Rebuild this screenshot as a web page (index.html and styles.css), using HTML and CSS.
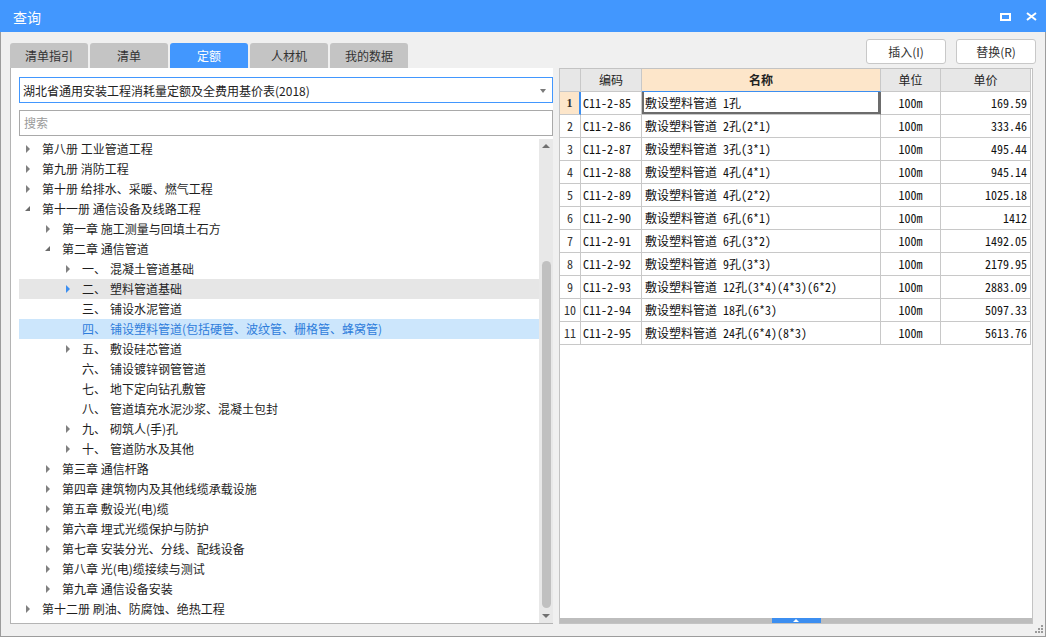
FILE: index.html
```html
<!DOCTYPE html>
<html>
<head>
<meta charset="utf-8">
<link rel="stylesheet" href="styles.css">
</head>
<body>
<div class="window">
  <div class="titlebar">
    <span class="title">查询</span>
    <span class="tb-icons">
      <svg width="11" height="8" viewBox="0 0 11 8"><rect x="1" y="1" width="9" height="6" fill="none" stroke="#fff" stroke-width="2"/></svg>
      <svg width="11" height="9" viewBox="0 0 11 9"><path d="M1 1L10 8M10 1L1 8" stroke="#fff" stroke-width="2" fill="none"/></svg>
    </span>
  </div>
  <div class="toprow">
    <div class="tabs">
      <div class="tab">清单指引</div>
      <div class="tab">清单</div>
      <div class="tab active">定额</div>
      <div class="tab">人材机</div>
      <div class="tab">我的数据</div>
    </div>
    <div class="buttons">
      <button class="btn">插入(I)</button>
      <button class="btn">替换(R)</button>
    </div>
  </div>
  <div class="main">
    <div class="left">
      <div class="combo"><span>湖北省通用安装工程消耗量定额及全费用基价表(2018)</span><i class="combo-arrow"></i></div>
      <div class="search">搜索</div>
      <div class="treewrap">
        <div class="tree">
          <div class="row l0"><i class="arr shut"></i><span>第八册 工业管道工程</span></div>
          <div class="row l0"><i class="arr shut"></i><span>第九册 消防工程</span></div>
          <div class="row l0"><i class="arr shut"></i><span>第十册 给排水、采暖、燃气工程</span></div>
          <div class="row l0"><i class="arr open"></i><span>第十一册 通信设备及线路工程</span></div>
          <div class="row l1"><i class="arr shut"></i><span>第一章 施工测量与回填土石方</span></div>
          <div class="row l1"><i class="arr open"></i><span>第二章 通信管道</span></div>
          <div class="row l2"><i class="arr shut"></i><span class="no">一、</span><span>混凝土管道基础</span></div>
          <div class="row l2 hover"><i class="arr shut blue"></i><span class="no">二、</span><span>塑料管道基础</span></div>
          <div class="row l2"><i class="arr"></i><span class="no">三、</span><span>铺设水泥管道</span></div>
          <div class="row l2 sel"><i class="arr"></i><span class="no">四、</span><span>铺设塑料管道(包括硬管、波纹管、栅格管、蜂窝管)</span></div>
          <div class="row l2"><i class="arr shut"></i><span class="no">五、</span><span>敷设硅芯管道</span></div>
          <div class="row l2"><i class="arr"></i><span class="no">六、</span><span>铺设镀锌钢管管道</span></div>
          <div class="row l2"><i class="arr"></i><span class="no">七、</span><span>地下定向钻孔敷管</span></div>
          <div class="row l2"><i class="arr"></i><span class="no">八、</span><span>管道填充水泥沙浆、混凝土包封</span></div>
          <div class="row l2"><i class="arr shut"></i><span class="no">九、</span><span>砌筑人(手)孔</span></div>
          <div class="row l2"><i class="arr shut"></i><span class="no">十、</span><span>管道防水及其他</span></div>
          <div class="row l1"><i class="arr shut"></i><span>第三章 通信杆路</span></div>
          <div class="row l1"><i class="arr shut"></i><span>第四章 建筑物内及其他线缆承载设施</span></div>
          <div class="row l1"><i class="arr shut"></i><span>第五章 敷设光(电)缆</span></div>
          <div class="row l1"><i class="arr shut"></i><span>第六章 埋式光缆保护与防护</span></div>
          <div class="row l1"><i class="arr shut"></i><span>第七章 安装分光、分线、配线设备</span></div>
          <div class="row l1"><i class="arr shut"></i><span>第八章 光(电)缆接续与测试</span></div>
          <div class="row l1"><i class="arr shut"></i><span>第九章 通信设备安装</span></div>
          <div class="row l0"><i class="arr shut"></i><span>第十二册 刷油、防腐蚀、绝热工程</span></div>
        </div>
        <div class="vscroll">
          <i class="sb-up"></i>
          <div class="sb-space"></div>
          <div class="sb-thumb"></div>
          <i class="sb-down"></i>
        </div>
      </div>
    </div>
    <div class="right">
      <div class="grid">
        <div class="gr head">
          <div class="c num"></div>
          <div class="c">编码</div>
          <div class="c cur-col">名称</div>
          <div class="c">单位</div>
          <div class="c">单价</div>
        </div>
        <div class="gr">
          <div class="c num cur-row">1</div><div class="c code">C11-2-85</div><div class="c name cur">敷设塑料管道 1孔</div><div class="c unit">100m</div><div class="c price">169.59</div>
        </div>
        <div class="gr">
          <div class="c num">2</div><div class="c code">C11-2-86</div><div class="c name">敷设塑料管道 2孔(2*1)</div><div class="c unit">100m</div><div class="c price">333.46</div>
        </div>
        <div class="gr">
          <div class="c num">3</div><div class="c code">C11-2-87</div><div class="c name">敷设塑料管道 3孔(3*1)</div><div class="c unit">100m</div><div class="c price">495.44</div>
        </div>
        <div class="gr">
          <div class="c num">4</div><div class="c code">C11-2-88</div><div class="c name">敷设塑料管道 4孔(4*1)</div><div class="c unit">100m</div><div class="c price">945.14</div>
        </div>
        <div class="gr">
          <div class="c num">5</div><div class="c code">C11-2-89</div><div class="c name">敷设塑料管道 4孔(2*2)</div><div class="c unit">100m</div><div class="c price">1025.18</div>
        </div>
        <div class="gr">
          <div class="c num">6</div><div class="c code">C11-2-90</div><div class="c name">敷设塑料管道 6孔(6*1)</div><div class="c unit">100m</div><div class="c price">1412</div>
        </div>
        <div class="gr">
          <div class="c num">7</div><div class="c code">C11-2-91</div><div class="c name">敷设塑料管道 6孔(3*2)</div><div class="c unit">100m</div><div class="c price">1492.05</div>
        </div>
        <div class="gr">
          <div class="c num">8</div><div class="c code">C11-2-92</div><div class="c name">敷设塑料管道 9孔(3*3)</div><div class="c unit">100m</div><div class="c price">2179.95</div>
        </div>
        <div class="gr">
          <div class="c num">9</div><div class="c code">C11-2-93</div><div class="c name">敷设塑料管道 12孔(3*4)(4*3)(6*2)</div><div class="c unit">100m</div><div class="c price">2883.09</div>
        </div>
        <div class="gr">
          <div class="c num">10</div><div class="c code">C11-2-94</div><div class="c name">敷设塑料管道 18孔(6*3)</div><div class="c unit">100m</div><div class="c price">5097.33</div>
        </div>
        <div class="gr">
          <div class="c num">11</div><div class="c code">C11-2-95</div><div class="c name">敷设塑料管道 24孔(6*4)(8*3)</div><div class="c unit">100m</div><div class="c price">5613.76</div>
        </div>
      </div>
      <div class="filler"></div>
      <div class="splitter"><div class="handle"><i></i></div></div>
    </div>
  </div>
  <div class="grip">
    <svg width="10" height="10" viewBox="0 0 10 10" fill="#9a9a9a"><rect x="7" y="1" width="2" height="2"/><rect x="4" y="4" width="2" height="2"/><rect x="7" y="4" width="2" height="2"/><rect x="1" y="7" width="2" height="2"/><rect x="4" y="7" width="2" height="2"/><rect x="7" y="7" width="2" height="2"/></svg>
  </div>
</div>
</body>
</html>
```
FILE: styles.css
```css
* { box-sizing: border-box; }
html, body { margin: 0; padding: 0; }
body {
  width: 1046px; height: 637px; overflow: hidden;
  font-family: "Noto Sans CJK SC", "Microsoft YaHei", sans-serif;
  font-size: 12px; color: #222;
}
.window {
  position: relative;
  width: 1046px; height: 637px;
  background: #f0f0f0;
  border: 1px solid #9c9c9c;
  border-top: none;
  display: flex; flex-direction: column;
}
.titlebar {
  height: 32px; margin: 0 -1px;
  background: #4297fe; color: #fff;
  display: flex; align-items: center;
  padding: 0 9px 0 13px;
}
.title { font-size: 14px; line-height: 32px; padding-top: 1px; }
.tb-icons { margin-left: auto; display: flex; align-items: center; gap: 15px; padding-top: 1px; }

.toprow {
  height: 36px; display: flex; justify-content: space-between;
}
.tabs { display: flex; gap: 2px; margin-left: 9px; align-self: flex-end; }
.tab {
  width: 78px; height: 25px; line-height: 25px; text-align: center;
  background: #c4c4c4; color: #333; font-size: 12px;
  border-radius: 3px 3px 0 0;
}
.tab.active { background: #4297fe; color: #fff; }
.buttons { display: flex; gap: 10px; margin-top: 7px; margin-right: 9px; align-self: flex-start; }
.btn {
  width: 80px; height: 25px; padding: 0;
  background: #fff; border: 1px solid #c8c8c8; border-radius: 3px;
  font-family: inherit; font-size: 12px; color: #333;
}

.main { display: flex; height: 556px; }
.left {
  margin-left: 9px; width: 543px;
  background: #fff;
  border-left: 1px solid #b4b4b4; border-bottom: 1px solid #b4b4b4;
  padding: 9px 0 0 8px;
  display: flex; flex-direction: column;
}
.combo {
  height: 26px; border: 1px solid #4297fe;
  display: flex; align-items: center; padding-left: 3px;
  position: relative; color: #222;
}
.combo-arrow {
  position: absolute; right: 6px; top: 11px;
  border-top: 4px solid #7a7a7a; border-left: 3.5px solid transparent; border-right: 3.5px solid transparent;
}
.search {
  height: 26px; margin-top: 7px; border: 1px solid #a9a9a9;
  padding-left: 4px; line-height: 24px; color: #9a9a9a;
}
.treewrap { margin-top: 3px; flex: 1; display: flex; min-height: 0; }
.tree { flex: 1; }
.row { height: 20px; line-height: 20px; display: flex; align-items: center; white-space: nowrap; color: #1e1e1e; }
.row.l1 { padding-left: 20px; }
.row.l2 { padding-left: 40px; }
.row.hover { background: #e6e6e6; }
.row.sel { background: #cce6fc; color: #2f7ddb; }
.arr { width: 23px; height: 20px; position: relative; flex: none; }
.arr.shut::before {
  content: ""; position: absolute; left: 7px; top: 6px;
  border-left: 4px solid #808080; border-top: 4px solid transparent; border-bottom: 4px solid transparent;
}
.arr.shut.blue::before { border-left-color: #3c8ef0; }
.arr.open::before {
  content: ""; position: absolute; left: 6px; top: 7px;
  border-bottom: 5px solid #6c6c6c; border-left: 5px solid transparent;
}
.no { width: 28px; flex: none; }
.vscroll {
  width: 14px; background: #e8e8e8;
  display: flex; flex-direction: column; align-items: center;
}
.sb-up {
  margin-top: 5px; width: 0; height: 0;
  border-bottom: 4px solid #707070; border-left: 4px solid transparent; border-right: 4px solid transparent;
}
.sb-space { height: 113px; }
.sb-thumb { width: 9px; flex: 1; background: #c0c0c0; border-radius: 5px; margin-bottom: 6px; }
.sb-down {
  margin-bottom: 5px; width: 0; height: 0;
  border-top: 4px solid #707070; border-left: 4px solid transparent; border-right: 4px solid transparent;
}

.right {
  margin-left: 6px; width: 474px;
  background: #fff;
  border: 1px solid #c3c3c3;
  display: flex; flex-direction: column;
}
.gr {
  display: grid; grid-template-columns: 21px 61px 239px 60px 90px;
  height: 23px;
}
.c {
  border-right: 1px solid #c8c8c8; border-bottom: 1px solid #c8c8c8;
  line-height: 22px; white-space: nowrap; overflow: hidden;
  font-family: "Noto Sans Mono CJK SC", "Liberation Mono", monospace;
  font-size: 12px; color: #111;
}
.head .c {
  background: #e7e7e7; text-align: center;
  font-family: "Noto Sans CJK SC", sans-serif; font-size: 12px; color: #222;
}
.head .c.cur-col { background: #fde6ca; border-bottom-color: #3c8ef0; font-weight: bold; }
.num { text-align: center; background: #fff; color: #333; }
.head .num { background: #e7e7e7; }
.num.cur-row { background: #fde6ca; border-right: 2px solid #3c8ef0; font-weight: bold; font-family: "Liberation Serif", serif; }
.code { padding-left: 2px; }
.name { padding-left: 3px; }
.name.cur { box-shadow: inset 2px 0 #6c6c6c, inset -2px 0 #6c6c6c, inset 0 -2px #6c6c6c; border-right-color: #6c6c6c; }
.unit { text-align: center; }
.price { text-align: right; padding-right: 3px; }
.filler { flex: 1; }
.splitter { height: 5px; background: #bdbdbd; display: flex; justify-content: center; }
.handle { width: 49px; height: 5px; background: #3c8ef0; position: relative; }
.handle i {
  position: absolute; left: 21px; top: 1px;
  border-bottom: 3px solid #fff; border-left: 3.5px solid transparent; border-right: 3.5px solid transparent;
}
.grip { position: absolute; right: 1px; bottom: 2px; line-height: 0; }
```
